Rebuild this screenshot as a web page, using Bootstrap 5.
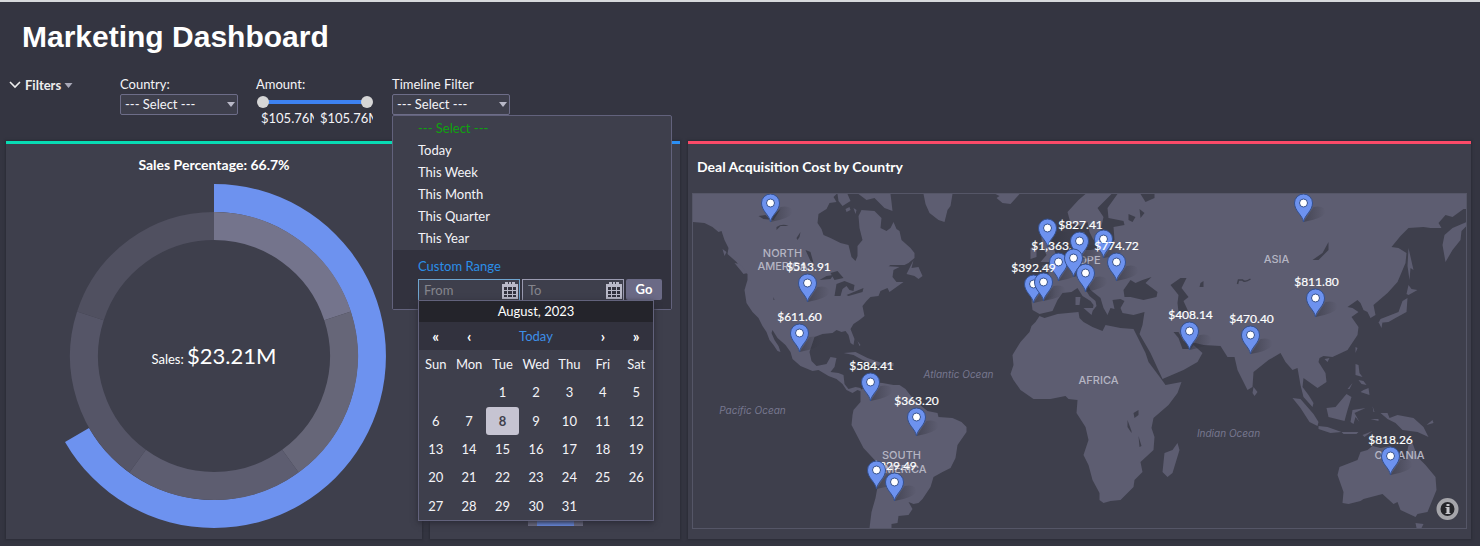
<!DOCTYPE html>
<html lang="en">
<head>
<meta charset="utf-8">
<meta name="viewport" content="width=device-width, initial-scale=1">
<title>Marketing Dashboard</title>
<link href="https://cdn.jsdelivr.net/npm/bootstrap@5.3.0/dist/css/bootstrap.min.css" rel="stylesheet">
<style>
  body { background: #343541; color: #f4f4f8; font: 400 13px/18px Lato, sans-serif; border-top: 2px solid #d7d9dc; }
  h1 { font: 700 30px/36px "Liberation Sans", sans-serif; color: #fff; padding: 17px 22px 0; }
  .filters { padding: 20px 8px 0; height: 86px; gap: 18px; }
  .filter-toggle { width: 94px; font-weight: 700; font-size: 13px; line-height: 20px; color: #eee; gap: 3px; }
  .filter-item { width: 118px; }
  .filter-item > label, .filter-item > .caption { display: block; height: 19px; line-height: 19px; font-size: 13px; }
  .picker { height: 21px; line-height: 17px; font-size: 13px; color: #f4f4f8; background-color: #3e3f4c; border: 1px solid #6d6d88; border-radius: 2px; padding: 0 4px; text-align: left; width: 118px;
    appearance: none; }
  .picker-wrap { position: relative; height: 21px; }
  .picker-wrap > svg { position: absolute; right: 3px; top: 8px; pointer-events: none; }
  .range-pair { display: grid; height: 16px; margin: 0 1px; align-items: center; background: linear-gradient(#3d82f2, #3d82f2) center/calc(100% - 12px) 4px no-repeat; }
  .range-pair input { grid-area: 1 / 1; width: 100%; height: 16px; appearance: none; background: none; margin: 0; pointer-events: none; }
  .range-pair input::-webkit-slider-thumb { appearance: none; width: 12px; height: 12px; border-radius: 50%; background: #d6d6d6; border: 0; pointer-events: auto; }
  .range-values { padding: 0 1px 0 5px; }
  .range-value { width: 53px; overflow: hidden; white-space: nowrap; line-height: 16px; }

  .menu-panel { width: 280px; top: 100%; left: 0; background: #3e3f4c; border: 1px solid #62627c; border-radius: 2px; padding: 1px 0 0; font-size: 13px; }
  .menu-panel .dropdown-item { height: 22px; line-height: 20px; padding: 1px 25px; color: #f4f4f8; }
  .menu-panel .dropdown-item.chosen { color: #0fa30f; }
  .menu-panel .dropdown-item:hover { background: #4c4d5c; }
  .custom-range { background: #32323e; margin-top: 1px; padding: 7px 9px 9px 25px; height: 59px; }
  .custom-range .heading { color: #2b8fe8; line-height: 18px; }
  .date-field { width: 102px; height: 22px; background: #3e3f4c; border: 1px solid #9a9ab0; }
  .date-field.active { border-color: #6fa5cf; }
  .date-field input { width: 82px; border: 0; background: none; color: #fff; padding: 0 5px; outline: 0; }
  .date-field input::placeholder { color: #85858c; }
  .go { width: 36px; height: 21px; border: 0; border-radius: 2px; padding: 0; background: #6b6a86; color: #fff; font-weight: 700; font-size: 13px; line-height: 21px; }

  .calendar { width: 236px; top: 184px; left: 25px; background: #3e3f4c; border: 1px solid #62627c; box-shadow: 0 2px 6px #2a2a35; z-index: 5; }
  .calendar caption { caption-side: top; background: #24242b; color: #fff; text-align: center; padding: 0; height: 21px; line-height: 21px; }
  .calendar table { width: 100%; height: 198px; table-layout: fixed; font-size: 13px; color: #f4f4f8; text-align: center; }
  .calendar th { font-weight: 400; text-align: center; height: 28px; padding: 0; }
  .calendar td { height: 28px; padding: 0; }
  .calendar .steps th { background: #32323e; }
  .calendar .steps button { border: 0; background: none; color: #fff; padding: 0; font-weight: 700; font-size: 15px; line-height: 18px; }
  .calendar .steps .now { color: #3d8fe8; font-weight: 400; font-size: 13px; }
  .calendar .current span { display: block; height: 28px; line-height: 28px; background: #c6c4d2; color: #3e3f4c; border-radius: 3px; font-weight: 700; }

  .board { display: grid; grid-template-columns: 416fr 250fr 783fr; gap: 8px; padding: 0 9px 7px 6px; }
  .panel { background: #3e3f4c; border-top: 3px solid; box-shadow: 0 0 2px 1px #2b2c37; height: 398px; min-width: 0; }
  .panel-sales { border-color: #08dbb4; }
  .panel-mini { border-color: #2b8ff5; }
  .panel-map { border-color: #fb4a68; padding: 13px 4px 11px; }
  .panel h2 { font-size: 14px; line-height: 20px; font-weight: 700; color: #fff; margin: 0; }
  .panel-sales h2 { padding-top: 11px; margin-bottom: 9px; }
  .panel-map h2 { padding: 0 5px; margin-bottom: 16px; }
  .panel-map svg { display: block; width: 100%; height: 336px; border: 1px solid #555667; }
  .stack { padding-bottom: 13px; }
  .stack div { height: 7px; }
  .shade-grey { background: #727288; width: 9px; }
  .shade-blue { background: #6d92ef; width: 37px; }

  .land { fill: #5d5d71; }
  .water { fill: #3e3f4c; }
  .region { font: 500 11px Inter, sans-serif; fill: #b5b5c3; text-anchor: middle; }
  .ocean { font: italic 400 10px Inter, sans-serif; fill: #77778f; text-anchor: middle; }
  .price { font: 400 12px Lato, sans-serif; fill: #fff; stroke: #fff; stroke-width: .2px; text-anchor: middle; }
</style>
</head>
<body>
<h1 class="m-0">Marketing Dashboard</h1>

<div class="filters d-flex">
  <button type="button" class="filter-toggle btn p-0 border-0 d-flex align-items-center align-self-start">
    <svg width="14" height="10" viewBox="0 0 14 10" fill="none" stroke="#eee" stroke-width="1.6"><path d="M2 2l5 5 5-5"/></svg>
    Filters
    <svg width="9" height="5" viewBox="0 0 8 5"><path d="M0 0h8L4 5z" fill="#a9a9b8"/></svg>
  </button>

  <div class="filter-item">
    <label for="country">Country:</label>
    <div class="picker-wrap">
      <select id="country" class="picker"><option>--- Select ---</option></select>
      <svg width="8" height="5" viewBox="0 0 8 5"><path d="M0 0h8L4 5z" fill="#b9b9c8"/></svg>
    </div>
  </div>

  <div class="filter-item">
    <label for="amount-min">Amount:</label>
    <div class="range-pair">
      <input id="amount-min" type="range" min="0" max="100" value="0" aria-label="Minimum amount">
      <input id="amount-max" type="range" min="0" max="100" value="100" aria-label="Maximum amount">
    </div>
    <div class="range-values d-flex justify-content-between">
      <span class="range-value">$105.76M</span><span class="range-value">$105.76M</span>
    </div>
  </div>

  <div class="filter-item dropdown">
    <span class="caption" id="timeline-caption">Timeline Filter</span>
    <div class="picker-wrap">
      <button type="button" class="picker" aria-labelledby="timeline-caption" aria-expanded="true">--- Select ---</button>
      <svg width="8" height="5" viewBox="0 0 8 5"><path d="M0 0h8L4 5z" fill="#b9b9c8"/></svg>
      <div class="menu-panel dropdown-menu show">
        <a class="dropdown-item chosen" href="#">--- Select ---</a>
        <a class="dropdown-item" href="#">Today</a>
        <a class="dropdown-item" href="#">This Week</a>
        <a class="dropdown-item" href="#">This Month</a>
        <a class="dropdown-item" href="#">This Quarter</a>
        <a class="dropdown-item" href="#">This Year</a>
        <div class="custom-range">
          <div class="heading">Custom Range</div>
          <div class="d-flex mt-1" style="gap:2px">
            <div class="date-field active d-flex align-items-center">
              <input type="text" placeholder="From" aria-label="From">
              <svg width="18" height="18"><use href="#cal"/></svg>
            </div>
            <div class="date-field d-flex align-items-center">
              <input type="text" placeholder="To" aria-label="To">
              <svg width="18" height="18"><use href="#cal"/></svg>
            </div>
            <button type="button" class="go">Go</button>
          </div>
        </div>
        <div class="calendar position-absolute">
          <table>
            <caption>August, 2023</caption>
            <thead>
              <tr class="steps">
                <th><button type="button">«</button></th><th><button type="button">‹</button></th>
                <th colspan="3"><button type="button" class="now">Today</button></th>
                <th><button type="button">›</button></th><th><button type="button">»</button></th>
              </tr>
              <tr><th>Sun</th><th>Mon</th><th>Tue</th><th>Wed</th><th>Thu</th><th>Fri</th><th>Sat</th></tr>
            </thead>
            <tbody>
              <tr><td></td><td></td><td>1</td><td>2</td><td>3</td><td>4</td><td>5</td></tr>
              <tr><td>6</td><td>7</td><td class="current"><span>8</span></td><td>9</td><td>10</td><td>11</td><td>12</td></tr>
              <tr><td>13</td><td>14</td><td>15</td><td>16</td><td>17</td><td>18</td><td>19</td></tr>
              <tr><td>20</td><td>21</td><td>22</td><td>23</td><td>24</td><td>25</td><td>26</td></tr>
              <tr><td>27</td><td>28</td><td>29</td><td>30</td><td>31</td><td></td><td></td></tr>
            </tbody>
          </table>
        </div>
      </div>
    </div>
  </div>
</div>

<main class="board">
  <section class="panel panel-sales text-center">
    <h2>Sales Percentage: 66.7%</h2>
    <svg width="344" height="348" viewBox="-172 -172 344 348">
      <path fill="#6d92ef" d="M0-172A172 172 0 1 1-149 86L-125 72A144 144 0 1 0 0-144z"/>
      <g fill="none" stroke-width="28">
        <path stroke="#74748c" d="M0-130A130 130 0 0 1 123.6-40.2"/>
        <path stroke="#666678" d="M123.6-40.2A130 130 0 0 1 76.4 105.2"/>
        <path stroke="#5d5d70" d="M76.4 105.2A130 130 0 0 1-76.4 105.2"/>
        <path stroke="#555567" d="M-76.4 105.2A130 130 0 0 1-123.6-40.2"/>
        <path stroke="#505060" d="M-123.6-40.2A130 130 0 0 1 0-130"/>
      </g>
      <text y="8" text-anchor="middle" fill="#fff" font-size="13">Sales: <tspan font-size="22">$23.21M</tspan></text>
    </svg>
  </section>

  <section class="panel panel-mini d-flex justify-content-center align-items-end">
    <div class="stack d-flex">
      <div class="shade-grey"></div><div class="shade-blue"></div><div class="shade-grey"></div>
    </div>
  </section>

  <section class="panel panel-map">
    <h2>Deal Acquisition Cost by Country</h2>
    <svg viewBox="692 194 774 334" preserveAspectRatio="xMidYMid slice" role="img" aria-label="World map">
      <g class="land">
        <!-- North and Central America -->
        <path d="M692 194V222L704 223 712 227 718 232 721 231 724 240 728 248 727 254 736 262 741 269 747 274V280L744 290 746 303 752 312 758 318 762 326 766 332 769 340 773 345 777 351 780 352 778 346 774 340 771 333 772 330 777 338 785 345 790 352 792 359 800 366 812 371 818 370 828 376 836 379 842 384 846 390 852 393 857 390 862 392 860 388 855 387 848 389 844 384 843 375 838 373 830 372 834 367 836 358 830 357 826 364 816 366 811 361 809 352 812 343 814 337 822 334 832 333 836 330 841 332 845 331 848 335 850 343 853 345 854 339 850 329 853 324 859 320 864 316 862 306 866 301 870 297 878 296 880 291 887 288 889 292 903 282 896 282 892 277 893 270 899 267 885 266 877 276 884 269 890 265 904 265 908 263 914 258 914 253 910 248 901 240 899 231 896 229 893 222 890 228 886 231 880 228 881 218 874 211 861 210 858 216 859 228 862 240 857 246 857 256 855 261 851 257 848 245 840 243 830 238 823 235 821 229 817 223 818 214 826 209 829 203 836 202 833 197 836 194z"/>
        <path d="M837 194h10l3 7-8 5-4-5zM858 194h32l1 8 1 9-8-3-10-10-8 2zM845 209l4-2 1 3-4 2zM853 208l3 2-1 4z"/>
        <path d="M923 194H952L950 206 947 210 944 222 938 220 929 213 925 204zM995 194h24l-9 10-8-1-6-5 3-2z"/>
        <path d="M913 260L911 268 918 267 922 276 918 279 914 276 906 274zM722 249l4 3-2 4zM734 263l5 1 8 9-4 1z"/>
        <path d="M843 353L855 352 867 358 881 363 878 366 862 360 853 355zM857 341l3 4-1 1zM884 363h9v3h-10z"/>
        <!-- South America -->
        <path d="M860 390L863 388 872 382 882 383 893 385 899 385 905 389 912 398 922 407 927 411 937 413 938 417 952 418 961 422 966 427 966 432 957 445 955 458 950 468 942 472 933 477 930 487 922 499 918 503 913 504 908 502 912 509 908 515 898 516 897 523 891 524V528H869L871 512 875 498 877 487 876 462 863 448 851 425 852 415 853 410 860 402z"/>
        <!-- Africa and Madagascar -->
        <path d="M1039 316L1044 318 1057 314 1078 312 1079 318 1083 322 1092 327 1102 331 1105 325 1120 328 1133 329 1137 337 1145 353 1148 362 1160 378 1165 385 1181 382 1177 393 1168 405 1153 418 1151 428 1154 437 1153 450 1140 462 1142 472 1134 480 1133 487 1120 500 1110 501 1103 503 1099 500 1099 493 1092 480 1088 465 1083 455 1088 440 1085 427 1076 413 1077 400 1068 399 1065 396 1050 399 1033 399 1020 390 1013 380 1010 374 1013 365 1012 355 1020 342 1029 332 1031 326 1035 322z"/>
        <path d="M1177 443L1179 450 1172 473 1167 477 1162 472 1164 453 1172 450z"/>
        <!-- Europe and Asia -->
        <path d="M1032 285L1031 302 1032 310 1039 314 1052 311 1057 300 1062 293 1071 292 1077 288 1082 296 1090 301 1093 305 1092 311 1096 306 1095 301 1089 296 1084 288 1087 284 1090 290 1100 298 1103 308 1107 315 1110 308 1114 309 1112 300 1120 299 1124 301 1120 308 1122 313 1133 315 1144 312 1142 325 1139 334 1150 353 1162 379 1183 370 1197 362 1202 353 1193 345 1190 349 1182 349 1178 338 1173 332 1178 332 1183 341 1195 343 1203 345 1220 346 1227 357 1234 357 1237 370 1247 390 1252 387 1253 372 1268 360 1280 353 1285 362 1292 370 1297 368 1300 385 1303 397 1312 407 1313 403 1308 395 1302 387 1303 378 1310 383 1317 388 1326 382 1325 373 1318 362 1319 358 1323 356 1332 357 1347 350 1357 335 1358 327 1351 317 1358 312 1352 308 1347 307 1357 300 1360 303 1363 310 1367 312 1370 318 1375 315 1373 305 1387 293 1397 282 1405 263 1406 253 1398 248 1391 247 1400 236 1408 228 1423 227 1430 228 1441 228 1438 223 1445 215 1452 217 1463 209 1467 209V194H1117L1107 208 1108 218 1123 221 1124 225 1113 227 1114 240 1105 247 1090 250 1078 250 1068 254 1053 263 1041 266 1048 272 1048 282z"/>
        <path d="M1111 194L1097 208 1103 217 1100 230 1093 240 1089 232 1087 222 1080 226 1070 223 1067 212 1078 200 1085 194zM1079 232h5l-1 17h-5z"/>
        <path d="M1040 231l8 1 4 13 4 11-4 6h-12l6-7-4-9zM1030 248l6-3v12l-6 2zM1083 308h10l-2 7zM1075 297h5l-1 8h-4z"/>
        <path d="M1442 245L1444 235 1452 228 1466 222V226L1461 231 1460 240 1452 250 1445 262z"/>
        <path d="M1408 248l5 22-3-2-1 12-2-14zM1408 285l3 4 6 1-9 5-2-1zM1407 298l-1 14-11 6-7 4-10 1 2-4 18-7 4-11zM1378 322h4l-1 6z"/>
        <!-- South-east Asian islands -->
        <path d="M1253 387l4 5-3 4-2-3zM1292 398l8 1 13 15 5 8-1 4-8-4-9-14zM1318 426l9 1 14 5-11 1-12-4zM1326 408l9-1 11-13 5 3-4 13-3 11-16-4zM1352 410l13-2-11 5 5 9-4-5-2 7-3-2zM1355 364l3 1 1 8 3 4-7-2zM1363 390l5-2 1 7-9-3zM1347 389l5-6-3 6zM1358 380l5 1 3 4-5-1zM1355 347l2 1-2 5zM1324 359l5-1-2 4zM1341 432h17l-2 2h-13zM1362 435l10-4-8 6zM1372 406l2 6h-1zM1370 419h8v2z"/>
        <path d="M1380 413l7 0 2 5 8-3 16 3 10 9 5 10-11-5-15-2-7-7-8-4zM1426 425l6-5 1 3zM1440 425l3 3zM1453 435l5 3z"/>
        <!-- Australia -->
        <path d="M1337 475L1339 467 1357 460 1360 452 1367 450 1372 446 1380 448 1390 446 1389 453 1397 458 1405 460 1408 445 1412 443 1417 457 1425 465 1435 477 1436 490 1427 512 1417 514 1415 517 1400 510 1397 502 1393 504 1382 494 1363 499 1360 501 1348 504 1342 503 1343 492zM1415 523l8 1-2 4h-5z"/>
      </g>
      <g class="water">
        <path d="M830 273l7-2 6 7-9 2zM834 296l2-12 8-3 10 4-1 6-4-1-3-4-4 3-2 7zM846 295l17-7-1 4-14 4zM805 250l5 2 3 11-3-2zM758 216l7-1 4 4 11-10-7 11-10-1zM776 227q6-4 12-1h-8l-4 4zM796 238l4-6-1 5-2 3zM773 297l1 3h-1zM819 280l7-4 7-1-3 4z"/>
        <path d="M1130 280l5 3 7-3 9-3-6 6 12 9-1 5-13 3-13-3h-6l-1-7zM1170 285l10-7h6l-5 10 7 9-5 4 5 11h-10l-1-9 1-8zM1200 283l3-2v6h-4zM1128 214l7 3-3 5-4-2zM1139 209l5 4-4 5zM1140 194h14v4l-9 4zM1328 242v8l-10 10h-6l10-7z"/>
        <path d="M1133 413l5-3v5l-4 3zM1127 420l4 11v2l-4-6zM1138 436l3 10-2 1z"/>
      </g>
      <path d="M1237 284l1-4h4q2 3 8-1" fill="none" stroke="#3e3f4c" stroke-width="1.5"/>

      <text class="region" x="782" y="257">NORTH</text><text class="region" x="782" y="270">AMERICA</text>
      <text class="region" x="901" y="459">SOUTH</text><text class="region" x="901" y="473">AMERICA</text>
      <text class="region" x="1078" y="264">EUROPE</text>
      <text class="region" x="1276" y="263">ASIA</text>
      <text class="region" x="1098" y="384">AFRICA</text>
      <text class="region" x="1399" y="459">OCEANIA</text>
      <text class="ocean" x="752" y="414">Pacific Ocean</text>
      <text class="ocean" x="958" y="378">Atlantic Ocean</text>
      <text class="ocean" x="1228" y="437">Indian Ocean</text>

      <defs>
        <linearGradient id="fade"><stop stop-color="#33343f" stop-opacity=".55"/><stop offset="1" stop-color="#33343f" stop-opacity="0"/></linearGradient>
        <g id="pin">
          <path d="M0 19L10 4Q22 2 22 10 18 16 0 19z" fill="url(#fade)"/>
          <path d="M0 19C-1 12-9 8-9 0A9 9 0 0 1 9 0C9 8 1 12 0 19z" fill="#6d92ef" stroke="#34508f"/>
          <circle r="4" fill="#fff" stroke="#34508f"/>
        </g>
      </defs>
      <use href="#pin" x="770" y="203"/><use href="#pin" x="1303" y="203"/>
      <use href="#pin" x="807" y="283"/><text class="price" x="808" y="271">$513.91</text>
      <use href="#pin" x="799" y="333"/><text class="price" x="799" y="321">$611.60</text>
      <use href="#pin" x="870" y="382"/><text class="price" x="871" y="370">$584.41</text>
      <use href="#pin" x="916" y="417"/><text class="price" x="916" y="405">$363.20</text>
      <text class="price" x="894" y="470">$829.49</text><use href="#pin" x="876" y="470"/><use href="#pin" x="894" y="482"/>
      <use href="#pin" x="1047" y="228"/><use href="#pin" x="1103" y="239"/>
      <text class="price" x="1051" y="250">$1,363.</text><use href="#pin" x="1079" y="241"/><text class="price" x="1080" y="229">$827.41</text>
      <use href="#pin" x="1058" y="262"/><use href="#pin" x="1073" y="258"/><use href="#pin" x="1085" y="273"/>
      <use href="#pin" x="1116" y="262"/><text class="price" x="1116" y="250">$774.72</text>
      <use href="#pin" x="1033" y="284"/><use href="#pin" x="1043" y="282"/><text class="price" x="1033" y="272">$392.49</text>
      <use href="#pin" x="1189" y="331"/><text class="price" x="1190" y="319">$408.14</text>
      <use href="#pin" x="1250" y="335"/><text class="price" x="1251" y="323">$470.40</text>
      <use href="#pin" x="1315" y="298"/><text class="price" x="1316" y="286">$811.80</text>
      <use href="#pin" x="1390" y="456"/><text class="price" x="1390" y="444">$818.26</text>
      <circle cx="1447" cy="509" r="9" fill="#25252a" stroke="#a5a5aa" stroke-width="4"/>
      <path d="M1446 504h3v2h-3zM1445 507h4v6h1v1h-5v-1h1v-5h-1z" fill="#c5c5ca"/>
    </svg>
  </section>
</main>

<svg width="0" height="0" class="position-absolute">
  <symbol id="cal" viewBox="0 0 18 18">
    <path d="M1 3h16v15H1z" fill="#b9b9c8"/><path d="M4 1h3v4H4zM8 1h2v3H8zM11 1h3v4h-3z" fill="#b9b9c8"/>
    <path d="M3 6h3v3H3zM7 6h4v3H7zM12 6h3v3h-3zM3 10h3v3H3zM7 10h4v3H7zM12 10h3v3h-3zM3 14h3v2H3zM7 14h4v2H7zM12 14h3v2h-3z" fill="#32323e"/>
  </symbol>
</svg>
<script src="https://cdn.jsdelivr.net/npm/bootstrap@5.3.0/dist/js/bootstrap.bundle.min.js"></script>
</body>
</html>
